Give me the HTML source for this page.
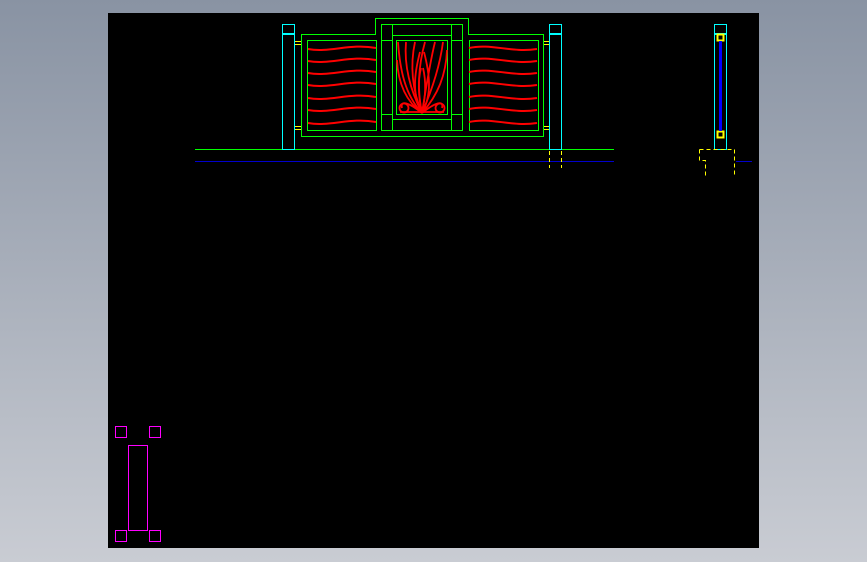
<!DOCTYPE html>
<html><head><style>
html,body{margin:0;padding:0}
body{width:867px;height:562px;background:linear-gradient(#8993a3,#c9ccd3);position:relative;overflow:hidden}
svg{position:absolute;left:0;top:0}
</style></head><body>
<svg width="867" height="562" viewBox="0 0 867 562">
<rect x="108" y="13" width="651" height="535" fill="#000"/>
<g fill="none" stroke-width="1" shape-rendering="crispEdges">
<line x1="195" y1="149.5" x2="614" y2="149.5" stroke="#0f0"/>
<line x1="195" y1="161.5" x2="614" y2="161.5" stroke="#00c"/>
<g stroke="#0ff">
<rect x="282.5" y="24.5" width="12" height="9"/><rect x="282.5" y="34.5" width="12" height="115"/>
<rect x="549.5" y="24.5" width="12" height="9"/><rect x="549.5" y="34.5" width="12" height="115"/>
<rect x="714.5" y="24.5" width="12" height="9"/><rect x="714.5" y="34.5" width="12" height="115"/>
</g>
<g stroke="#ff0">
<line x1="295" y1="41.5" x2="301" y2="41.5"/><line x1="295" y1="44.5" x2="301" y2="44.5"/>
<line x1="295" y1="126.5" x2="301" y2="126.5"/><line x1="295" y1="129.5" x2="301" y2="129.5"/>
<line x1="543" y1="41.5" x2="549" y2="41.5"/><line x1="543" y1="44.5" x2="549" y2="44.5"/>
<line x1="543" y1="126.5" x2="549" y2="126.5"/><line x1="543" y1="129.5" x2="549" y2="129.5"/>
<line x1="549.5" y1="151" x2="549.5" y2="168" stroke-dasharray="4,3"/>
<line x1="561.5" y1="151" x2="561.5" y2="168" stroke-dasharray="4,3"/>
<rect x="717.5" y="34.5" width="6" height="6" stroke-width="2"/>
<rect x="717.5" y="131.5" width="6" height="6" stroke-width="2"/>
<path d="M699.5 149.5H734.5V176M699.5 149.5V160.5H705.5V176" stroke-dasharray="4,3"/>
</g>
<line x1="720.5" y1="41" x2="720.5" y2="131" stroke="#00f" stroke-width="3"/>
<line x1="736" y1="161.5" x2="752" y2="161.5" stroke="#00c"/>
<g stroke="#0f0">
<path d="M301.5 136.5V34.5H375.5V18.5H468.5V34.5H543.5V136.5Z"/>
<rect x="381.5" y="24.5" width="81" height="106"/>
<rect x="307.5" y="40.5" width="69" height="90"/>
<rect x="469.5" y="40.5" width="69" height="90"/>
<line x1="392.5" y1="24" x2="392.5" y2="130"/><line x1="396.5" y1="40" x2="396.5" y2="114"/>
<line x1="447.5" y1="40" x2="447.5" y2="114"/><line x1="451.5" y1="24" x2="451.5" y2="130"/>
<line x1="392" y1="35.5" x2="451" y2="35.5"/><line x1="381" y1="40.5" x2="392" y2="40.5"/><line x1="451" y1="40.5" x2="462" y2="40.5"/>
<line x1="396" y1="40.5" x2="448" y2="40.5"/><line x1="396" y1="114.5" x2="448" y2="114.5"/>
<line x1="381" y1="114.5" x2="392" y2="114.5"/><line x1="451" y1="114.5" x2="462" y2="114.5"/>
<line x1="392" y1="119.5" x2="451" y2="119.5"/>
</g>
<g stroke="#f0f">
<rect x="115.5" y="426.5" width="11" height="11"/><rect x="149.5" y="426.5" width="11" height="11"/>
<rect x="128.5" y="445.5" width="19" height="85"/>
<rect x="115.5" y="530.5" width="11" height="11"/><rect x="149.5" y="530.5" width="11" height="11"/>
</g>
</g>
<g fill="none" stroke="#f00" stroke-width="2">
<path d="M308 49 C330 53,350 43,376 48"/>
<path d="M308 61 C330 65,350 55,376 60"/>
<path d="M308 73 C330 77,350 67,376 72"/>
<path d="M308 85 C330 89,350 79,376 84"/>
<path d="M308 98 C330 102,350 92,376 97"/>
<path d="M308 110 C330 114,350 104,376 109"/>
<path d="M308 123 C330 127,350 117,376 122"/>
<g transform="translate(161,0)">
<path d="M308 48 C330 43,350 53,376 49"/>
<path d="M308 60 C330 55,350 65,376 61"/>
<path d="M308 72 C330 67,350 77,376 73"/>
<path d="M308 84 C330 79,350 89,376 85"/>
<path d="M308 97 C330 92,350 102,376 98"/>
<path d="M308 109 C330 104,350 114,376 110"/>
<path d="M308 122 C330 117,350 127,376 123"/>
</g>
<g stroke-width="1.8">
<path d="M422 113 C405 95,400 70,398 42"/><path d="M422 113 C410 90,404 65,406 42"/>
<path d="M422 113 C412 90,410 65,415 42"/><path d="M422 113 C416 85,420 60,425 42"/>
<path d="M422 113 C426 88,430 62,435 42"/><path d="M422 113 C432 90,440 65,443 42"/>
<path d="M422 113 C438 95,446 75,447 50"/><path d="M422 113 C404 100,398 80,397 60"/>
<path d="M422 113 C412 95,414 75,420 52"/><path d="M422 113 C432 95,430 75,424 52"/>
<path d="M422 113 C418 95,418 80,421 68"/><path d="M422 113 C426 95,426 80,423 68"/>
<path d="M422 113 C408 102,400 100,402 108"/><path d="M422 113 C436 102,444 100,442 108"/>
<circle cx="404" cy="108" r="4.5"/><circle cx="440" cy="108" r="4.5"/>
<path d="M400 112 L444 112"/>
</g>
</g>
</svg>
</body></html>
